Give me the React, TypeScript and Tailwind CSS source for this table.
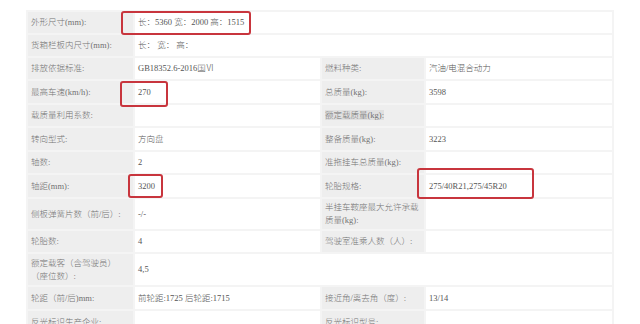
import React from "react";

type Row = {
  h: number;
  l1: string;
  v1?: string;
  l2?: string;
  v2?: string;
  span?: boolean;
  hl2?: boolean;
};

const rows: Row[] = [
  { h: 23, l1: "外形尺寸(mm):", v1: "长：5360 宽：2000 高：1515", span: true },
  { h: 23, l1: "货箱栏板内尺寸(mm):", v1: "长：  宽：  高：", span: true },
  { h: 23, l1: "排放依据标准:", v1: "GB18352.6-2016国Ⅵ", l2: "燃料种类:", v2: "汽油/电混合动力" },
  { h: 24, l1: "最高车速(km/h):", v1: "270", l2: "总质量(kg):", v2: "3598" },
  { h: 23, l1: "载质量利用系数:", v1: "", l2: "额定载质量(kg):", v2: "", hl2: true },
  { h: 24, l1: "转向型式:", v1: "方向盘", l2: "整备质量(kg):", v2: "3223" },
  { h: 23, l1: "轴数:", v1: "2", l2: "准拖挂车总质量(kg):", v2: "" },
  { h: 24, l1: "轴距(mm):", v1: "3200", l2: "轮胎规格:", v2: "275/40R21,275/45R20" },
  { h: 32, l1: "侧板弹簧片数（前/后）:", v1: "-/-", l2: "半挂车鞍座最大允许承载\n质量(kg):", v2: "" },
  { h: 23, l1: "轮胎数:", v1: "4", l2: "驾驶室准乘人数（人）:", v2: "" },
  { h: 33, l1: "额定载客（含驾驶员）\n（座位数）:", v1: "4,5", span: true },
  { h: 24, l1: "轮距（前/后)mm:", v1: "前轮距:1725 后轮距:1715", l2: "接近角/离去角（度）:", v2: "13/14" },
  { h: 24, l1: "反光标识生产企业:", v1: "", l2: "反光标识型号:", v2: "" },
];

const cell = "px-[3px] border-2 border-[#f4f4f4] align-middle leading-[13px] font-light whitespace-pre-line";
const label = `${cell} bg-[#eeeeee] text-[#727272]`;
const value = `${cell} bg-white text-[#555555]`;

export default function App() {
  return (
    <div
      className="relative w-[640px] h-[324px] overflow-hidden bg-white text-[8.5px] pl-[26px] pt-[10px]"
      style={{ fontFamily: '"Liberation Serif", "Noto Sans CJK SC", serif' }}
    >
      <table className="w-[586px] border-collapse table-fixed">
        <colgroup>
          <col className="w-[107px]" />
          <col className="w-[187px]" />
          <col className="w-[104px]" />
          <col className="w-[188px]" />
        </colgroup>
        <tbody>
          {rows.map((r, i) => (
            <tr key={i} style={{ height: r.h }}>
              <td className={label}>{r.l1}</td>
              {r.span ? (
                <td className={value} colSpan={3}>{r.v1}</td>
              ) : (
                <>
                  <td className={value}>{r.v1}</td>
                  <td className={label}>
                    {r.hl2 ? <span className="bg-[#e0e0e0]">{r.l2}</span> : r.l2}
                  </td>
                  <td className={value}>{r.v2}</td>
                </>
              )}
            </tr>
          ))}
        </tbody>
      </table>

      {/* red highlight boxes */}
      <div className="absolute left-[121px] top-[11px] w-[130px] h-[24px] border-2 border-[#c8353d] rounded-[3px]" />
      <div className="absolute left-[120px] top-[81px] w-[48px] h-[26px] border-2 border-[#c8353d] rounded-[3px]" />
      <div className="absolute left-[128px] top-[174px] w-[35px] h-[24px] border-2 border-[#c8353d] rounded-[3px]" />
      <div className="absolute left-[417px] top-[168px] w-[117px] h-[31px] border-2 border-[#c8353d] rounded-[3px]" />
    </div>
  );
}
